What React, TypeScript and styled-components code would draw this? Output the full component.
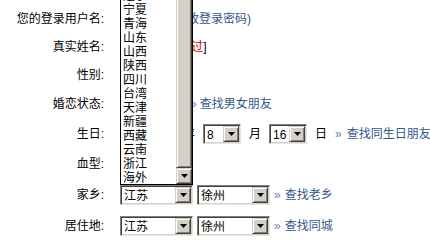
import React from "react";
import styled, { createGlobalStyle } from "styled-components";

const Global = createGlobalStyle`
  html, body { margin: 0; padding: 0; background: #fff; overflow: hidden; }
  body { font-family: "Liberation Sans", "Noto Sans CJK SC", sans-serif; font-size: 12px; color: #000; }
`;

const Form = styled.div`
  display: flex;
  flex-direction: column;
  padding-top: 5px;
  width: 430px;
`;

const Row = styled.div<{ $h: number }>`
  display: flex;
  align-items: center;
  height: ${(p) => p.$h}px;
`;

const Label = styled.div`
  width: 104px;
  flex-shrink: 0;
  text-align: right;
  line-height: 14px;
  white-space: nowrap;
`;

const Value = styled.div<{ $gap?: number }>`
  display: flex;
  align-items: center;
  margin-left: 16px;
  gap: ${(p) => p.$gap ?? 0}px;
  line-height: 14px;
  white-space: nowrap;
`;

const Spacer = styled.span<{ $w: number }>`
  display: inline-block;
  width: ${(p) => p.$w}px;
  height: 14px;
`;

const Link = styled.span`
  color: #34578a;
`;

const Red = styled.span`
  color: #cc0000;
`;

const Unit = styled.span`
  display: inline-block;
  width: 12px;
  text-align: center;
`;

const Find = styled.span<{ $gap?: number }>`
  display: inline-flex;
  align-items: center;
  color: #34578a;
  &::before {
    content: "»";
    color: #6a86ad;
    margin-right: ${(p) => p.$gap ?? 4}px;
  }
`;

const SelectWrap = styled.div<{ $w: number }>`
  position: relative;
  display: flex;
  width: ${(p) => p.$w}px;
  height: 20px;
  box-sizing: border-box;
  border: 1px solid;
  border-color: #808080 #e8e6e1 #e8e6e1 #808080;
  box-shadow: inset 1px 1px 0 #404040, inset -1px -1px 0 #d4d0c8;
  padding: 2px;
  background: #fff;
`;

const SelectText = styled.div`
  flex: 1;
  padding-left: 1px;
  line-height: 16px;
  overflow: hidden;
`;

const ArrowBtn = styled.div`
  width: 16px;
  height: 16px;
  margin: -1px -1px 0 0;
  box-sizing: border-box;
  background: #d4d0c8;
  border: 1px solid;
  border-color: #d4d0c8 #404040 #404040 #d4d0c8;
  box-shadow: inset 1px 1px 0 #fff, inset -1px -1px 0 #808080;
  display: flex;
  align-items: center;
  justify-content: center;
  flex-shrink: 0;
`;

const Tri = () => (
  <svg width="7" height="4" viewBox="0 0 7 4" style={{ display: "block" }}>
    <polygon points="0,0 7,0 3.5,4" fill="#000" />
  </svg>
);

const ListBox = styled.div`
  position: absolute;
  left: -1px;
  bottom: calc(100% + 1px);
  width: 73px;
  box-sizing: border-box;
  border: 1px solid #000;
  background: #fff;
  display: flex;
  z-index: 10;
`;

const Items = styled.div`
  flex: 1;
  display: flex;
  flex-direction: column;
`;

const Item = styled.div`
  height: 14px;
  line-height: 14px;
  padding-left: 2px;
  font-family: "Noto Sans CJK SC", sans-serif;
  font-size: 12px;
`;

const Scroll = styled.div`
  width: 16px;
  display: flex;
  flex-direction: column;
`;

const Thumb = styled.div`
  flex: 1;
  box-sizing: border-box;
  background: #d4d0c8;
  border: 1px solid;
  border-color: #d4d0c8 #404040 #404040 #d4d0c8;
  box-shadow: inset 1px 1px 0 #fff, inset -1px -1px 0 #808080;
`;

const ScrollBtn = styled(ArrowBtn)`
  margin: 0;
`;

const provinces = [
  "辽宁", "宁夏", "青海", "山东", "山西", "陕西", "四川",
  "台湾", "天津", "新疆", "西藏", "云南", "浙江", "海外",
];

const Select: React.FC<{ w: number; value: string; children?: React.ReactNode }> = ({
  w,
  value,
  children,
}) => (
  <SelectWrap $w={w}>
    <SelectText>{value}</SelectText>
    <ArrowBtn>
      <Tri />
    </ArrowBtn>
    {children}
  </SelectWrap>
);

export default function App() {
  return (
    <>
      <Global />
      <Form>
        <Row $h={28}>
          <Label>您的登录用户名:</Label>
          <Value>
            <Spacer $w={51} />
            <Link>(修改登录密码)</Link>
          </Value>
        </Row>
        <Row $h={28}>
          <Label>真实姓名:</Label>
          <Value>
            <Spacer $w={44} />
            [<Red>未通过</Red>]
          </Value>
        </Row>
        <Row $h={28}>
          <Label>性别:</Label>
          <Value>
            <Spacer $w={70} />
          </Value>
        </Row>
        <Row $h={29}>
          <Label>婚恋状态:</Label>
          <Value>
            <Spacer $w={70} />
            <Find $gap={3}>查找男女朋友</Find>
          </Value>
        </Row>
        <Row $h={31}>
          <Label>生日:</Label>
          <Value $gap={8}>
            <Select w={55} value="" />
            <Unit>年</Unit>
            <Select w={38} value="8" />
            <Unit>月</Unit>
            <Select w={38} value="16" />
            <Unit>日</Unit>
            <Find $gap={5}>查找同生日朋友</Find>
          </Value>
        </Row>
        <Row $h={30}>
          <Label>血型:</Label>
          <Value>
            <Spacer $w={70} />
          </Value>
        </Row>
        <Row $h={31}>
          <Label>家乡:</Label>
          <Value $gap={4}>
            <Select w={73} value="江苏">
              <ListBox>
                <Items>
                  {provinces.map((p) => (
                    <Item key={p}>{p}</Item>
                  ))}
                </Items>
                <Scroll>
                  <Thumb />
                  <ScrollBtn>
                    <Tri />
                  </ScrollBtn>
                </Scroll>
              </ListBox>
            </Select>
            <Select w={73} value="徐州" />
            <Find>查找老乡</Find>
          </Value>
        </Row>
        <Row $h={31}>
          <Label>居住地:</Label>
          <Value $gap={4}>
            <Select w={73} value="江苏" />
            <Select w={73} value="徐州" />
            <Find>查找同城</Find>
          </Value>
        </Row>
      </Form>
    </>
  );
}
